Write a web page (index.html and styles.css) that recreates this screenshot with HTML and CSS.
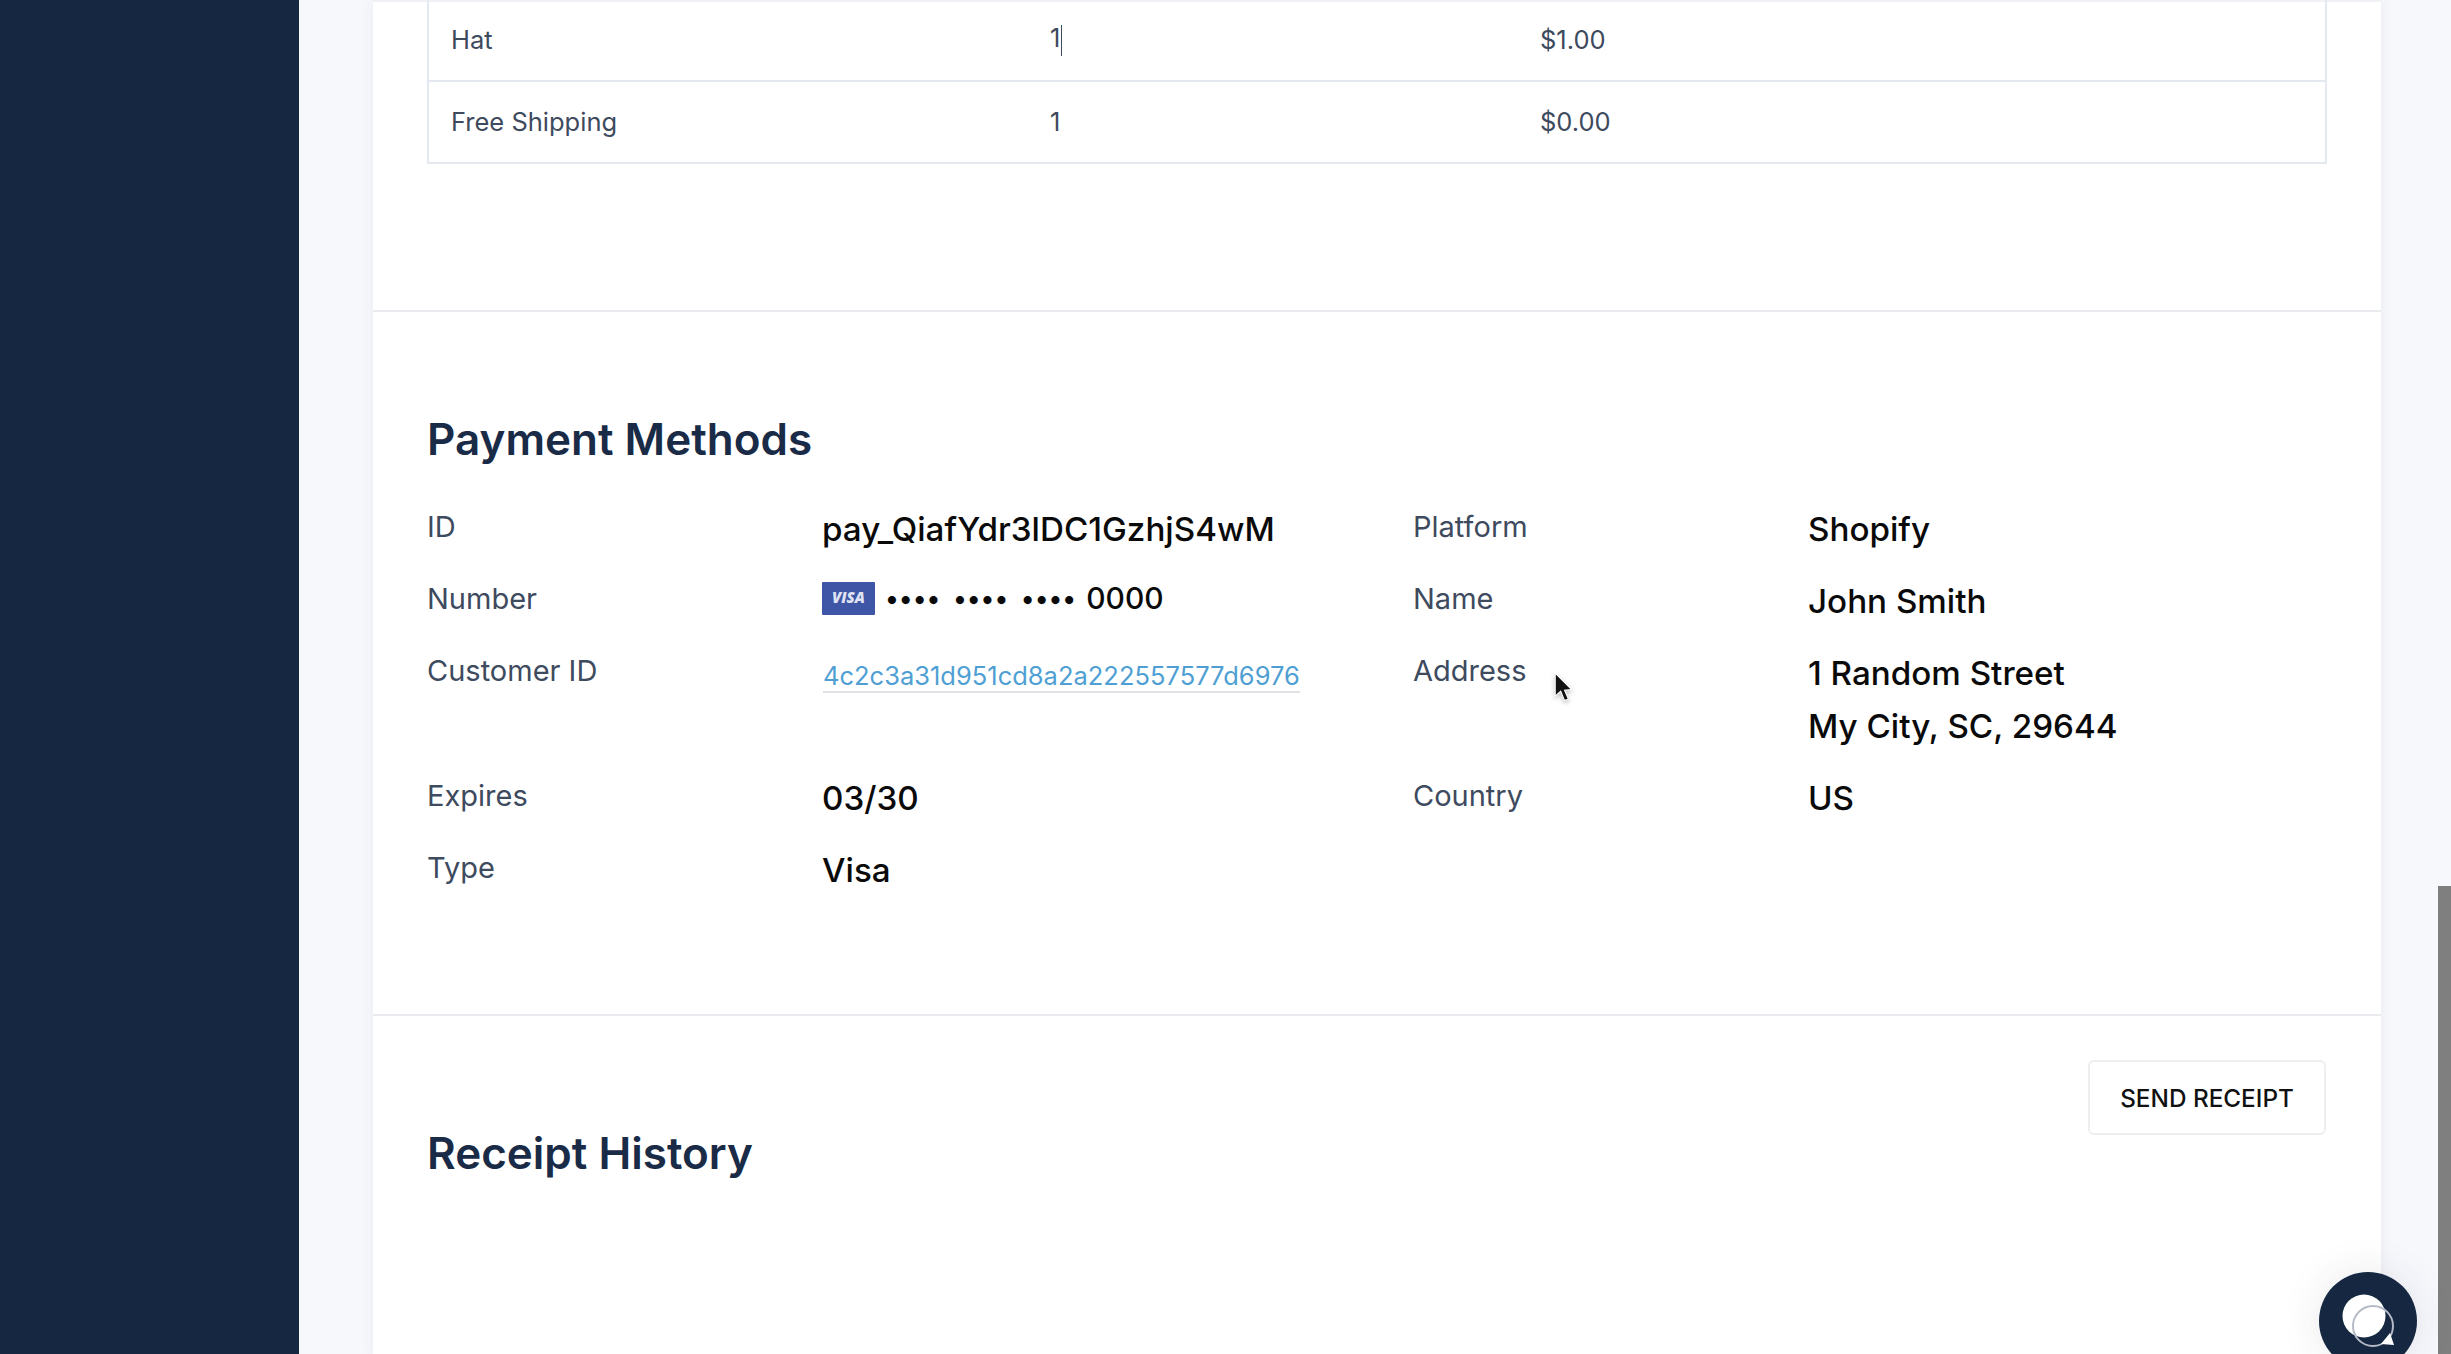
FILE: index.html
```html
<!DOCTYPE html>
<html lang="en-US">
  <head>
    <meta charset="utf-8" />
    <title>Order details</title>
    <link rel="stylesheet" href="styles.css">
  </head>

  <body>
    <div class="sidebar"></div>

    <div class="main">
      <div class="card">
        <section class="section itemsSection">
          <table class="items">
            <colgroup>
              <col class="nameCol">
              <col class="qtyCol">
              <col>
            </colgroup>
            <tr>
              <td>Hat</td>
              <td>1<span class="caret"></span></td>
              <td>$1.00</td>
            </tr>
            <tr>
              <td>Free Shipping</td>
              <td>1</td>
              <td>$0.00</td>
            </tr>
          </table>
        </section>

        <section class="section paymentSection">
          <h2>Payment Methods</h2>
          <div class="details">
            <div class="label">ID</div>
            <div class="value">pay_QiafYdr3lDC1GzhjS4wM</div>
            <div class="label">Platform</div>
            <div class="value">Shopify</div>

            <div class="label">Number</div>
            <div class="value cardNumber">
              <svg class="visa" viewBox="0 0 53 33" width="53" height="33">
                <rect width="53" height="33" rx="1" fill="#3f55a5"/>
                <text x="26.5" y="21" text-anchor="middle" class="visaText">VISA</text>
              </svg>
              <span class="dots">•••• •••• ••••</span>
              <span class="lastFour">0000</span>
            </div>
            <div class="label">Name</div>
            <div class="value">John Smith</div>

            <div class="label">Customer ID</div>
            <div class="value"><a class="link" href="#">4c2c3a31d951cd8a2a222557577d6976</a></div>
            <div class="label">Address</div>
            <div class="value">1 Random Street<br>My City, SC, 29644</div>

            <div class="label">Expires</div>
            <div class="value">03/30</div>
            <div class="label">Country</div>
            <div class="value">US</div>

            <div class="label">Type</div>
            <div class="value">Visa</div>
          </div>
        </section>

        <section class="section receiptSection">
          <h2>Receipt History</h2>
          <button class="sendReceipt">SEND RECEIPT</button>
        </section>
      </div>
    </div>

    <svg class="pointer" viewBox="0 0 20 30" width="22" height="33">
      <path d="M2 1 L2 22 L7 17.5 L10.5 26 L14 24.5 L10.5 16.5 L17 16 Z" fill="#111" stroke="#fff" stroke-width="1"/>
    </svg>

    <div class="scrollThumb"></div>

    <div class="chat">
      <svg viewBox="0 0 98 98" width="98" height="98">
        <circle cx="45" cy="44" r="21.5" fill="#fff"/>
        <circle cx="54" cy="54" r="20" fill="none" stroke="#b4bac6" stroke-width="2"/>
        <path d="M62 72 L75 73 L71 61 Z" fill="#fff"/>
      </svg>
    </div>
  </body>
</html>
```

FILE: styles.css
```css
html {
  height: 100%;
  overflow: hidden;
}

body {
  display: flex;
  height: 100%;
  margin: 0;
  overflow: hidden;
  font-family: Inter, "Liberation Sans", sans-serif;
  background-color: #f7f8fc;
}

.sidebar {
  flex: 0 0 299px;
  background-color: #152741;
}

.main {
  flex: 1;
  padding-left: 74px;
  padding-right: 70px;
}

.card {
  background-color: #fff;
  border-top: 2px solid #f0f1f4;
  box-shadow: 0 0 14px rgba(40, 50, 80, 0.07);
  height: 100%;
}

.section {
  display: flow-root;
  padding-left: 54px;
  padding-right: 54px;
  border-bottom: 2px solid #e9ebee;
}

.itemsSection {
  height: 308px;
}

.paymentSection {
  height: 702px;
}

.receiptSection {
  display: flex;
  justify-content: space-between;
  align-items: flex-start;
  padding-top: 44px;
  padding-right: 55px;
  border-bottom: none;
}

h2 {
  margin: 0;
  font-size: 44px;
  line-height: 52px;
  font-weight: 600;
  color: #1a2b47;
}

.paymentSection h2 {
  padding-top: 101px;
}

.receiptSection h2 {
  padding-top: 67px;
}

.items {
  width: 100%;
  margin-top: -4px;
  table-layout: fixed;
  border-collapse: collapse;
  font-size: 25.5px;
  color: #3e4a5e;
}

.items td {
  height: 78px;
  padding: 0 22px 2px;
  border: 2px solid #e4e9f1;
  border-left: none;
  border-right: none;
}

.items tr td:first-child {
  border-left: 2px solid #e4e9f1;
}

.items tr td:last-child {
  border-right: 2px solid #e4e9f1;
}

.nameCol {
  width: 600px;
}

.qtyCol {
  width: 490px;
}

.caret {
  display: inline-block;
  width: 1px;
  height: 31px;
  margin-left: 1px;
  vertical-align: middle;
  background-color: #3e4a5e;
}

.details {
  display: grid;
  grid-template-columns: 395px 591px 395px 1fr;
  row-gap: 19px;
  margin-top: 38px;
}

.label {
  font-size: 29px;
  line-height: 47px;
  color: #3e4a5e;
}

.value {
  font-size: 33.2px;
  line-height: 53px;
  font-weight: 500;
  color: #0a0a0a;
}

.cardNumber {
  display: flex;
  align-items: center;
  gap: 10px;
  height: 47px;
}

.dots {
  font-size: 26px;
  word-spacing: 5.5px;
}

.lastFour {
  font-size: 30px;
}

.visaText {
  font-family: "Open Sans", sans-serif;
  font-size: 15px;
  font-weight: 800;
  font-style: italic;
  fill: #dfe3f3;
}

.link {
  margin-left: 1px;
  font-size: 25.5px;
  font-weight: 400;
  color: #4f9fd4;
  text-decoration: none;
  border-bottom: 2px solid #dfe1e4;
}

.sendReceipt {
  width: 238px;
  height: 75px;
  padding: 0;
  font-family: inherit;
  font-size: 24.3px;
  font-weight: 500;
  color: #111;
  background-color: #fff;
  border: 2px solid #eceef0;
  border-radius: 6px;
}

/* things lying over the page */
.pointer {
  position: absolute;
  left: 1553px;
  top: 672px;
  filter: drop-shadow(0 2px 2px rgba(0, 0, 0, 0.25));
}

.scrollThumb {
  position: absolute;
  top: 886px;
  right: 0;
  width: 13px;
  height: 468px;
  background-color: #7f7f7f;
}

.chat {
  position: fixed;
  left: 2319px;
  top: 1272px;
  width: 98px;
  height: 98px;
  border-radius: 50%;
  background-color: #152741;
  box-shadow: 0 0 40px rgba(40, 50, 80, 0.1);
}
```
